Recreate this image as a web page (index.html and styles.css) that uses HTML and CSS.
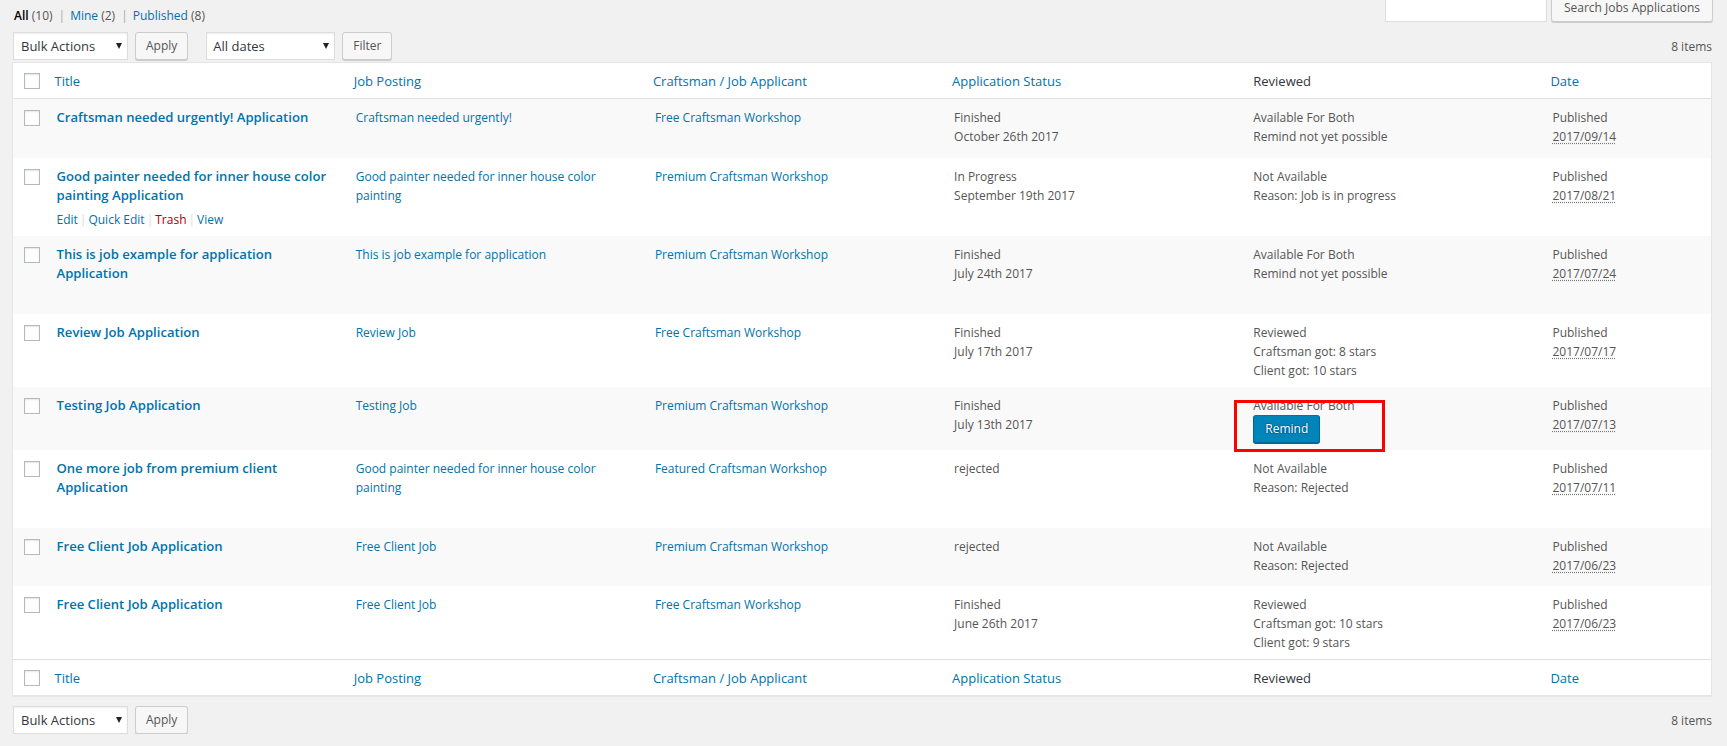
FILE: index.html
```html
<!DOCTYPE html>
<html lang="en">
<head>
<meta charset="utf-8">
<title>Jobs Applications</title>
<link rel="stylesheet" href="styles.css">
</head>
<body>
<div class="wrap">
  <div class="topbar">
    <ul class="subsubsub">
      <li><a class="current" href="#">All <span class="count">(10)</span></a><span class="sep">|</span></li>
      <li><a href="#">Mine <span class="count">(2)</span></a><span class="sep">|</span></li>
      <li><a href="#">Published <span class="count">(8)</span></a></li>
    </ul>
    <div class="search-box">
      <input class="search-input" type="search" aria-label="Search">
      <button class="button button-search">Search Jobs Applications</button>
    </div>
  </div>

  <div class="tablenav">
    <div class="actions">
      <div class="select select-bulk"><span>Bulk Actions</span><span class="caret"></span></div>
      <button class="button">Apply</button>
    </div>
    <div class="actions">
      <div class="select select-dates"><span>All dates</span><span class="caret"></span></div>
      <button class="button">Filter</button>
    </div>
    <div class="num">8 items</div>
  </div>

  <table class="list-table">
    <colgroup>
      <col class="c-check"><col class="c-main"><col class="c-main"><col class="c-main"><col class="c-main"><col class="c-main"><col>
    </colgroup>
    <thead>
      <tr>
        <th class="check"><input type="checkbox" class="cb" aria-label="Select all"></th>
        <th class="sortable"><a href="#">Title</a></th>
        <th class="sortable"><a href="#">Job Posting</a></th>
        <th class="sortable"><a href="#">Craftsman / Job Applicant</a></th>
        <th class="sortable"><a href="#">Application Status</a></th>
        <th>Reviewed</th>
        <th class="sortable"><a href="#">Date</a></th>
      </tr>
    </thead>
    <tbody>
      <tr>
        <td class="check"><input type="checkbox" class="cb"></td>
        <td><strong><a class="row-title" href="#">Craftsman needed urgently! Application</a></strong>
          <div class="row-actions"><a href="#">Edit</a><span class="sep">|</span><a href="#">Quick Edit</a><span class="sep">|</span><a class="trash" href="#">Trash</a><span class="sep">|</span><a href="#">View</a></div></td>
        <td><a href="#">Craftsman needed urgently!</a></td>
        <td><a href="#">Free Craftsman Workshop</a></td>
        <td class="lines">Finished<br>October 26th 2017</td>
        <td class="lines">Available For Both<br>Remind not yet possible</td>
        <td class="lines">Published<br><abbr>2017/09/14</abbr></td>
      </tr>
      <tr>
        <td class="check"><input type="checkbox" class="cb"></td>
        <td><strong><a class="row-title" href="#">Good painter needed for inner house color<br>painting Application</a></strong>
          <div class="row-actions shown"><a href="#">Edit</a><span class="sep">|</span><a href="#">Quick Edit</a><span class="sep">|</span><a class="trash" href="#">Trash</a><span class="sep">|</span><a href="#">View</a></div></td>
        <td><a href="#">Good painter needed for inner house color<br>painting</a></td>
        <td><a href="#">Premium Craftsman Workshop</a></td>
        <td class="lines">In Progress<br>September 19th 2017</td>
        <td class="lines">Not Available<br>Reason: Job is in progress</td>
        <td class="lines">Published<br><abbr>2017/08/21</abbr></td>
      </tr>
      <tr>
        <td class="check"><input type="checkbox" class="cb"></td>
        <td><strong><a class="row-title" href="#">This is job example for application<br>Application</a></strong>
          <div class="row-actions"><a href="#">Edit</a><span class="sep">|</span><a href="#">Quick Edit</a><span class="sep">|</span><a class="trash" href="#">Trash</a><span class="sep">|</span><a href="#">View</a></div></td>
        <td><a href="#">This is job example for application</a></td>
        <td><a href="#">Premium Craftsman Workshop</a></td>
        <td class="lines">Finished<br>July 24th 2017</td>
        <td class="lines">Available For Both<br>Remind not yet possible</td>
        <td class="lines">Published<br><abbr>2017/07/24</abbr></td>
      </tr>
      <tr>
        <td class="check"><input type="checkbox" class="cb"></td>
        <td><strong><a class="row-title" href="#">Review Job Application</a></strong>
          <div class="row-actions"><a href="#">Edit</a><span class="sep">|</span><a href="#">Quick Edit</a><span class="sep">|</span><a class="trash" href="#">Trash</a><span class="sep">|</span><a href="#">View</a></div></td>
        <td><a href="#">Review Job</a></td>
        <td><a href="#">Free Craftsman Workshop</a></td>
        <td class="lines">Finished<br>July 17th 2017</td>
        <td class="lines">Reviewed<br>Craftsman got: 8 stars<br>Client got: 10 stars</td>
        <td class="lines">Published<br><abbr>2017/07/17</abbr></td>
      </tr>
      <tr>
        <td class="check"><input type="checkbox" class="cb"></td>
        <td><strong><a class="row-title" href="#">Testing Job Application</a></strong>
          <div class="row-actions"><a href="#">Edit</a><span class="sep">|</span><a href="#">Quick Edit</a><span class="sep">|</span><a class="trash" href="#">Trash</a><span class="sep">|</span><a href="#">View</a></div></td>
        <td><a href="#">Testing Job</a></td>
        <td><a href="#">Premium Craftsman Workshop</a></td>
        <td class="lines">Finished<br>July 13th 2017</td>
        <td class="lines">
          <div class="annot-wrap">
            <div>Available For Both</div>
            <button class="button-primary">Remind</button>
            <div class="annot"></div>
          </div>
        </td>
        <td class="lines">Published<br><abbr>2017/07/13</abbr></td>
      </tr>
      <tr>
        <td class="check"><input type="checkbox" class="cb"></td>
        <td><strong><a class="row-title" href="#">One more job from premium client<br>Application</a></strong>
          <div class="row-actions"><a href="#">Edit</a><span class="sep">|</span><a href="#">Quick Edit</a><span class="sep">|</span><a class="trash" href="#">Trash</a><span class="sep">|</span><a href="#">View</a></div></td>
        <td><a href="#">Good painter needed for inner house color<br>painting</a></td>
        <td><a href="#">Featured Craftsman Workshop</a></td>
        <td class="lines">rejected</td>
        <td class="lines">Not Available<br>Reason: Rejected</td>
        <td class="lines">Published<br><abbr>2017/07/11</abbr></td>
      </tr>
      <tr>
        <td class="check"><input type="checkbox" class="cb"></td>
        <td><strong><a class="row-title" href="#">Free Client Job Application</a></strong>
          <div class="row-actions"><a href="#">Edit</a><span class="sep">|</span><a href="#">Quick Edit</a><span class="sep">|</span><a class="trash" href="#">Trash</a><span class="sep">|</span><a href="#">View</a></div></td>
        <td><a href="#">Free Client Job</a></td>
        <td><a href="#">Premium Craftsman Workshop</a></td>
        <td class="lines">rejected</td>
        <td class="lines">Not Available<br>Reason: Rejected</td>
        <td class="lines">Published<br><abbr>2017/06/23</abbr></td>
      </tr>
      <tr>
        <td class="check"><input type="checkbox" class="cb"></td>
        <td><strong><a class="row-title" href="#">Free Client Job Application</a></strong>
          <div class="row-actions"><a href="#">Edit</a><span class="sep">|</span><a href="#">Quick Edit</a><span class="sep">|</span><a class="trash" href="#">Trash</a><span class="sep">|</span><a href="#">View</a></div></td>
        <td><a href="#">Free Client Job</a></td>
        <td><a href="#">Free Craftsman Workshop</a></td>
        <td class="lines">Finished<br>June 26th 2017</td>
        <td class="lines">Reviewed<br>Craftsman got: 10 stars<br>Client got: 9 stars</td>
        <td class="lines">Published<br><abbr>2017/06/23</abbr></td>
      </tr>
    </tbody>
    <tfoot>
      <tr>
        <th class="check"><input type="checkbox" class="cb" aria-label="Select all"></th>
        <th class="sortable"><a href="#">Title</a></th>
        <th class="sortable"><a href="#">Job Posting</a></th>
        <th class="sortable"><a href="#">Craftsman / Job Applicant</a></th>
        <th class="sortable"><a href="#">Application Status</a></th>
        <th>Reviewed</th>
        <th class="sortable"><a href="#">Date</a></th>
      </tr>
    </tfoot>
  </table>

  <div class="tablenav bottom">
    <div class="actions">
      <div class="select select-bulk"><span>Bulk Actions</span><span class="caret"></span></div>
      <button class="button">Apply</button>
    </div>
    <div class="num">8 items</div>
  </div>
</div>
</body>
</html>
```

FILE: styles.css
```css
* { box-sizing: border-box; }

html, body { margin: 0; padding: 0; }

body {
  background: #f1f1f1;
  font-family: "Open Sans", "Noto Sans", sans-serif;
  font-size: 12px;
  color: #555;
}

a { color: #0073aa; text-decoration: none; }

.wrap { padding: 0 15px 0 12px; }

/* top bar */
.topbar {
  display: flex;
  justify-content: space-between;
  align-items: flex-start;
  height: 22px;
}

.subsubsub {
  list-style: none;
  margin: 0;
  padding: 6px 0 0 2px;
  display: flex;
  line-height: 19.5px;
  font-size: 12px;
}

.subsubsub .current { color: #000; font-weight: 600; }
.subsubsub .count { color: #555; font-weight: 400; }
.subsubsub .sep { color: #a8a8a8; margin: 0 5px 0 6px; }

.search-box {
  display: flex;
  gap: 4px;
  margin-top: -6px;
  margin-right: -1px;
}

.search-input {
  width: 162px;
  height: 28px;
  margin: 0;
  border: 1px solid #ddd;
  background: #fff;
  box-shadow: inset 0 1px 2px rgba(0, 0, 0, .07);
  outline: none;
}

.button {
  height: 28px;
  margin: 0;
  padding: 0 10px 1px;
  border: 1px solid #ccc;
  border-radius: 3px;
  background: #f7f7f7;
  box-shadow: 0 1px 0 #ccc;
  color: #555;
  font-family: "Open Sans", "Noto Sans", sans-serif;
  font-size: 12px;
  line-height: 26px;
  white-space: nowrap;
}

.button-search { padding: 0 12px 1px; }

/* table nav */
.tablenav {
  display: flex;
  align-items: center;
  height: 28px;
  margin: 10px 0 2px;
}

.tablenav.bottom { margin: 10px 0 0; }

.actions {
  display: flex;
  gap: 7px;
  margin-right: 18px;
}

.select {
  display: flex;
  align-items: center;
  justify-content: space-between;
  height: 28px;
  margin-left: 1px;
  padding: 0 5px 0 7px;
  border: 1px solid #ddd;
  background: #fff;
  box-shadow: inset 0 1px 2px rgba(0, 0, 0, .07);
  color: #32373c;
  font-size: 13px;
}

.select-bulk { width: 115px; }
.select-dates { width: 129px; margin-left: 0; padding-left: 6px; }

.caret {
  width: 0;
  height: 0;
  border-left: 3px solid transparent;
  border-right: 3px solid transparent;
  border-top: 6px solid #222;
}

.num { margin-left: auto; font-size: 12px; color: #555; }

/* list table */
.list-table {
  width: 100%;
  table-layout: fixed;
  border-collapse: separate;
  border-spacing: 0;
  background: #fff;
  border: 1px solid #e5e5e5;
  box-shadow: 0 1px 1px rgba(0, 0, 0, .04);
}

.c-check { width: 33.5px; }
.c-main { width: 299.2px; }

.list-table th,
.list-table td {
  padding: 9px 10px 7px;
  text-align: left;
  vertical-align: top;
  font-weight: 400;
}

.list-table thead th,
.list-table tfoot th {
  font-size: 13px;
  line-height: 19px;
  color: #32373c;
}

.list-table thead th { border-bottom: 1px solid #e1e1e1; }
.list-table tfoot th { border-top: 1px solid #e1e1e1; }

.list-table th.sortable { padding-left: 8px; }

.list-table th.check { padding: 10px 0 0 11px; }
.list-table td.check { padding: 11px 0 0 11px; }

.cb {
  appearance: none;
  -webkit-appearance: none;
  display: block;
  width: 16px;
  height: 16px;
  margin: 0;
  border: 1px solid #b4b9be;
  background: #fff;
  box-shadow: inset 0 1px 2px rgba(0, 0, 0, .1);
}

.list-table tbody tr:nth-child(odd) { background: #f9f9f9; }

.list-table tbody td {
  font-size: 12px;
  line-height: 19.5px;
  color: #555;
}

.list-table tbody td.lines { line-height: 19px; }

.row-title {
  font-size: 13.1px;
  font-weight: 600;
  line-height: 19.5px;
}

.row-actions {
  padding-top: 4px;
  line-height: 19px;
  font-size: 12px;
  color: #ddd;
  visibility: hidden;
}

.row-actions.shown { visibility: visible; }
.row-actions .sep { margin: 0 2px; }
.row-actions .trash { color: #a00; }

abbr {
  text-decoration: underline dotted #777;
  text-underline-offset: 2px;
}

/* remind button + annotation */
.annot-wrap { position: relative; }

.button-primary {
  display: block;
  height: 28px;
  margin: 0;
  padding: 0 11px 1px;
  border: 1px solid;
  border-color: #0073aa #006799 #006799;
  border-radius: 3px;
  background: #0085ba;
  box-shadow: 0 1px 0 #006799;
  color: #fff;
  font-family: "Open Sans", "Noto Sans", sans-serif;
  font-size: 12px;
  line-height: 26px;
  text-shadow: 0 -1px 1px #006799, 1px 0 1px #006799, 0 1px 1px #006799, -1px 0 1px #006799;
}

.annot {
  position: absolute;
  left: -19px;
  top: 4px;
  width: 151px;
  height: 52px;
  border: 3px solid #f00;
  pointer-events: none;
}
```
